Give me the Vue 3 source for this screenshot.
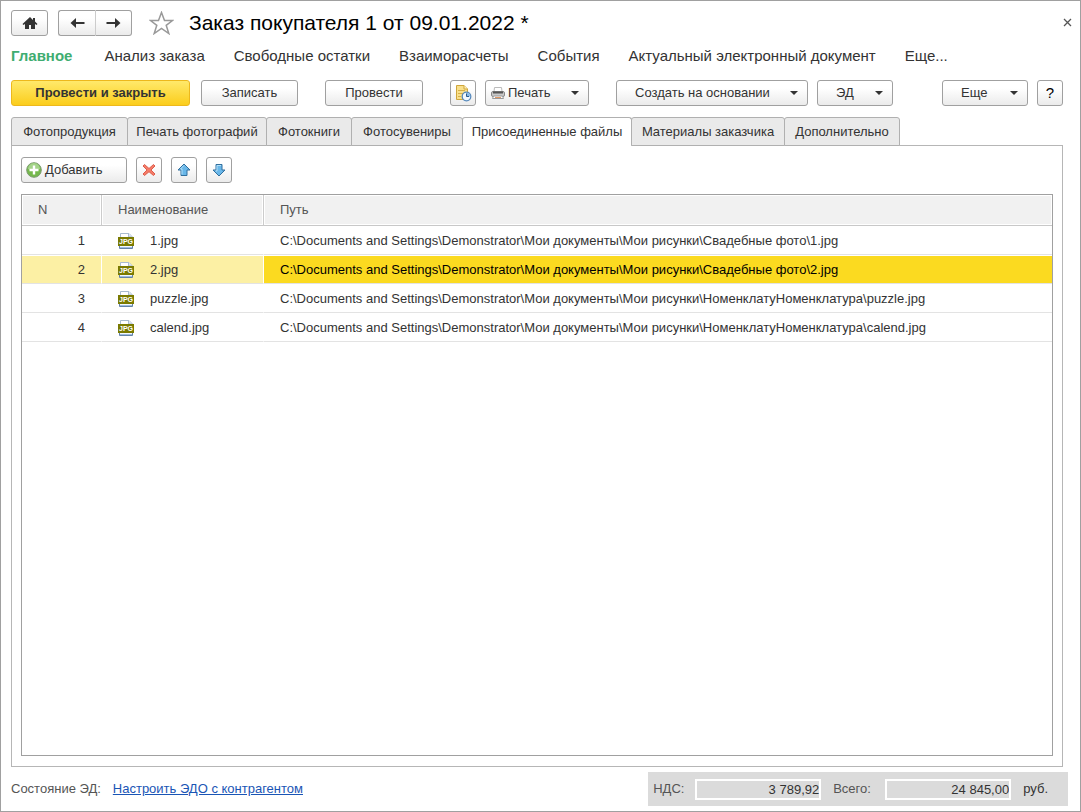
<script setup>
import { ref } from 'vue'

const links = ['Анализ заказа', 'Свободные остатки', 'Взаиморасчеты', 'События', 'Актуальный электронный документ', 'Еще...']
const tabs = [
  { title: 'Фотопродукция', width: 117 },
  { title: 'Печать фотографий', width: 140 },
  { title: 'Фотокниги', width: 86 },
  { title: 'Фотосувениры', width: 112 },
  { title: 'Присоединенные файлы', width: 170 },
  { title: 'Материалы заказчика', width: 154 },
  { title: 'Дополнительно', width: 116 },
]
const activeTab = ref(4)
const selected = ref(1)
const base = 'C:\\Documents and Settings\\Demonstrator\\Мои документы\\Мои рисунки\\'
const files = [
  { name: '1.jpg', path: base + 'Свадебные фото\\1.jpg' },
  { name: '2.jpg', path: base + 'Свадебные фото\\2.jpg' },
  { name: 'puzzle.jpg', path: base + 'НоменклатуНоменклатура\\puzzle.jpg' },
  { name: 'calend.jpg', path: base + 'НоменклатуНоменклатура\\calend.jpg' },
]
const vat = ref('3 789,92')
const total = ref('24 845,00')
</script>

<template>
  <div class="window">
    <header class="head">
      <button class="btn home" aria-label="Домой">
        <svg width="16" height="14" viewBox="0 0 16 14"><path d="M8 1L0.500 8L1.500 9L3 8V13H7V9H9V13H13V8L14.500 9L15.500 8L13 5.500V2H11V4Z" fill="#333" /></svg>
      </button>
      <div class="history">
        <button class="btn back" aria-label="Назад">
          <svg width="15" height="12" viewBox="0 0 15 12"><path d="M0.500 6L6 1V5H14.500V7H6V11Z" fill="#333" /></svg>
        </button>
        <button class="btn forward" aria-label="Вперед">
          <svg width="15" height="12" viewBox="0 0 15 12"><path d="M14.500 6L9 1V5H0.500V7H9V11Z" fill="#333" /></svg>
        </button>
      </div>
      <button class="plain star" aria-label="В избранное">
        <svg width="25" height="24" viewBox="0 0 25 24"><path d="M12.500 1.500L15.500 9.500H23.500L17.200 14.300L19.800 22.500L12.500 17.500L5.200 22.500L7.800 14.300L1.500 9.500H9.500Z" fill="#fff" stroke="#999" stroke-width="1.500" /></svg>
      </button>
      <h1>Заказ покупателя 1 от 09.01.2022 *</h1>
      <button class="plain close" aria-label="Закрыть">
        <svg width="9" height="9" viewBox="0 0 9 9"><path d="M1 1L8 8M8 1L1 8" stroke="#555" stroke-width="1.300" /></svg>
      </button>
    </header>

    <nav class="links">
      <a href="#" class="current">Главное</a>
      <a v-for="l in links" :key="l" href="#">{{ l }}</a>
    </nav>

    <div class="toolbar">
      <div class="group lead">
        <button class="btn primary">Провести и закрыть</button>
        <button class="btn save">Записать</button>
      </div>
      <button class="btn post">Провести</button>
      <div class="group">
        <button class="btn square" aria-label="Задание">
          <svg width="18" height="18" viewBox="0 0 18 18">
            <path d="M2.500 1.500H10L13.500 5V15.500H2.500Z" fill="#f9e08b" stroke="#cfa63c" />
            <path d="M10 1.500V5H13.500" fill="#fff3bd" stroke="#cfa63c" />
            <path d="M4 6.500H11M4 9.500H9M4 12.500H7" stroke="#d7b048" />
            <circle cx="12.500" cy="12.500" r="4.300" fill="#f2f8fd" stroke="#5588bb" stroke-width="1.300" />
            <path d="M12.500 12.500V8.700A3.800 3.800 0 0 1 16.300 12.500Z" fill="#87b9e6" />
            <path d="M12.500 12.500V9.500M12.500 12.500H15" stroke="#29598b" fill="none" />
          </svg>
        </button>
        <button class="btn print">
          <svg width="14" height="14" viewBox="0 0 14 14">
            <path d="M3 5.500L3.500 1.500H10.500L11 5.500" fill="#fff" stroke="#bbb" />
            <rect x="0.500" y="5.500" width="13" height="5" rx="1.500" fill="#c9c9c9" stroke="#888" />
            <path d="M2 6.500H12" stroke="#555" stroke-width="2" />
            <path d="M2.500 10H11.500L12.500 12.500H1.500Z" fill="#fff" stroke="#999" />
            <path d="M4 11.500H10" stroke="#e39a67" />
          </svg>
          <span>Печать</span><i class="caret"></i>
        </button>
      </div>
      <div class="group">
        <button class="btn create"><span>Создать на основании</span><i class="caret"></i></button>
        <button class="btn ed"><span>ЭД</span><i class="caret"></i></button>
      </div>
      <div class="group end">
        <button class="btn more"><span>Еще</span><i class="caret"></i></button>
        <button class="btn square help">?</button>
      </div>
    </div>

    <div class="tabs" role="tablist">
      <button
        v-for="(t, i) in tabs" :key="t.title" role="tab" class="tab"
        :class="{ active: i === activeTab }" :style="{ width: t.width + 'px' }"
        :aria-selected="i === activeTab" @click="activeTab = i"
      >{{ t.title }}</button>
    </div>

    <main class="panel">
      <div class="commands">
        <button class="btn add">
          <svg width="16" height="16" viewBox="0 0 16 16">
            <circle cx="8" cy="8" r="7.300" fill="#75b84c" stroke="#7c9a70" />
            <path d="M2 7A6 6 0 0 1 14 7Q8 9 2 7Z" fill="#a4d489" />
            <path d="M8 3.500V12.500M3.500 8H12.500" stroke="#fff" stroke-width="2.400" />
          </svg>
          <span>Добавить</span>
        </button>
        <button class="btn square" aria-label="Удалить">
          <svg width="14" height="14" viewBox="0 0 14 14"><path d="M2.500 1.500L7 5.500L11.500 1.500L13 3L9 7L13 11L11.500 12.500L7 8.700L2.500 12.500L1 11L5 7L1 3Z" fill="#f47c68" stroke="#de5d4c" /></svg>
        </button>
        <button class="btn square" aria-label="Переместить вверх">
          <svg width="14" height="14" viewBox="0 0 14 14"><path d="M7 1L13 7H10V12.500H4V7H1Z" fill="#69b7e9" stroke="#316f9e" /><path d="M7 2.500L3.500 6H5V11.500" fill="none" stroke="#b4e0f8" /></svg>
        </button>
        <button class="btn square" aria-label="Переместить вниз">
          <svg width="14" height="14" viewBox="0 0 14 14"><path d="M7 13L1 7H4V1.500H10V7H13Z" fill="#69b7e9" stroke="#316f9e" /><path d="M9 2.500H5V8H3.500" fill="none" stroke="#b4e0f8" /></svg>
        </button>
      </div>

      <div class="grid">
        <table>
          <colgroup><col class="c-num" /><col class="c-name" /><col /></colgroup>
          <thead>
            <tr><th>N</th><th>Наименование</th><th>Путь</th></tr>
          </thead>
          <tbody>
            <tr v-for="(f, i) in files" :key="f.name" :class="{ selected: i === selected }" @click="selected = i">
              <td class="num">{{ i + 1 }}</td>
              <td>
                <div class="file">
                  <svg width="16" height="16" viewBox="0 0 16 16" aria-hidden="true">
                    <path d="M2.500 5V0.500H11L14.500 4V5" fill="#fff" stroke="#a9bbd0" />
                    <path d="M10.500 0.500V4H14" fill="#dfe8f2" stroke="#a9bbd0" />
                    <path d="M1.500 12V15.500H14.500V12" fill="#f3f8fd" stroke="#6482a8" />
                    <path d="M2 14.500H14" stroke="#9dbbe0" />
                    <rect y="4" width="16" height="9" fill="#7a7a00" />
                    <text x="8" y="11" text-anchor="middle" font-size="7" font-weight="bold" fill="#fff">JPG</text>
                  </svg>
                  <span>{{ f.name }}</span>
                </div>
              </td>
              <td class="path">{{ f.path }}</td>
            </tr>
          </tbody>
        </table>
      </div>
    </main>

    <footer class="foot">
      <span class="state">Состояние ЭД:</span>
      <a href="#">Настроить ЭДО с контрагентом</a>
      <div class="totals">
        <label for="vat" class="vat">НДС:</label>
        <input id="vat" v-model="vat" type="text" readonly />
        <label for="total" class="total">Всего:</label>
        <input id="total" v-model="total" type="text" readonly />
        <span>руб.</span>
      </div>
    </footer>
  </div>
</template>

<style>
body { margin: 0; background: #fff; }
</style>

<style scoped>
* { box-sizing: border-box; }
.window {
  min-height: 100vh;
  display: flex;
  flex-direction: column;
  padding: 8px 17px 5px 10px;
  border: 1px solid #a0a0a0;
  background: #fff;
  color: #333;
  font: 13px/16px "Liberation Sans", Arial, sans-serif;
}
button, input { font: inherit; color: inherit; }
svg { display: block; flex: none; }
.btn {
  height: 26px;
  display: flex;
  align-items: center;
  justify-content: center;
  padding: 0;
  border: 1px solid #a0a0a0;
  border-radius: 3px;
  background: linear-gradient(#fff 30%, #ebebeb);
  white-space: nowrap;
}
.plain { padding: 0; border: 0; background: none; }
.head { display: flex; align-items: center; height: 27px; }
.home { width: 37px; margin-right: 10px; }
.history { display: flex; }
.back, .forward { width: 38px; }
.back { border-right-color: #ccc; border-radius: 3px 0 0 3px; }
.forward { width: 36px; border-left: 0; border-radius: 0 3px 3px 0; }
.star { margin: 0 15px 0 17px; }
h1 { margin: 0; color: #000; font-size: 21px; line-height: 26px; font-weight: normal; white-space: nowrap; }
.close { margin: 0 -9px 0 auto; }
.links { display: flex; gap: 29px; margin-top: 10px; font-size: 15px; line-height: 20px; white-space: nowrap; }
.links a { color: #333; text-decoration: none; }
.links .current { margin-right: 3px; color: #3fad71; font-weight: bold; }
.toolbar { display: flex; gap: 27px; margin-top: 14px; }
.group { display: flex; gap: 9px; }
.lead { gap: 11px; }
.end { margin-left: auto; }
.primary { width: 179px; border-color: #edb81c; background: linear-gradient(#ffe96b, #fbcd1c); font-weight: bold; }
.save { width: 97px; }
.post { width: 98px; }
.square { width: 26px; }
.help { font-size: 15px; color: #000; }
.caret { border: 4px solid transparent; border-top-color: #333; border-bottom: 0; }
.print, .create, .ed, .more { justify-content: space-between; padding-right: 9px; }
.print { width: 104px; padding-left: 5px; }
.print span { margin: 0 auto 0 3px; }
.create { width: 192px; padding-left: 18px; }
.ed { width: 76px; padding-left: 18px; }
.more { width: 86px; padding-left: 18px; }
.tabs { position: relative; display: flex; margin-top: 11px; }
.tab {
  height: 29px;
  padding: 0;
  border: 1px solid #b0b0b0;
  border-radius: 3px 3px 0 0;
  background: #eaeaea;
  white-space: nowrap;
}
.tab + .tab { margin-left: -1px; }
.tab.active { border-bottom-color: #fff; background: #fff; }
.panel {
  flex: 1;
  display: flex;
  flex-direction: column;
  margin-top: -1px;
  padding: 11px 9px 10px;
  border: 1px solid #b6b6b6;
}
.commands { display: flex; gap: 9px; }
.add { width: 106px; justify-content: flex-start; gap: 3px; padding-left: 4px; }
.grid { flex: 1; margin-top: 11px; border: 1px solid #a0a0a0; }
table { width: 100%; table-layout: fixed; border-collapse: separate; border-spacing: 0; }
.c-num { width: 80px; }
.c-name { width: 162px; }
th {
  height: 31px;
  padding: 0 0 0 16px;
  border-right: 1px solid #ccc;
  border-bottom: 1px solid #c8c8c8;
  background: #f1f1f1;
  box-shadow: inset 0 0 0 1px #fff;
  color: #555;
  font-weight: normal;
  text-align: left;
}
th:last-child { border-right: 0; }
td { height: 29px; padding: 0 0 0 16px; border-top: 1px solid #fff; border-bottom: 1px solid #e3e3e3; border-right: 1px solid #fff; white-space: nowrap; }
td:last-child { border-right: 0; }
.num { padding: 0 16px 0 0; text-align: right; }
.file { display: flex; align-items: center; gap: 16px; }
.selected td { background: #fcf0a4; background-clip: padding-box; }
.selected .path { background-color: #fbda20; color: #000; }
.foot { display: flex; align-items: center; margin-top: 5px; margin-right: -5px; }
.state { margin-right: 12px; color: #555; }
.foot a { color: #1a55b5; }
.totals { display: flex; align-items: center; height: 34px; margin-left: auto; padding: 0 20px 0 5px; background: #dbdbdb; }
.totals label { color: #555; }
.vat { width: 42px; }
.total { width: 52px; }
.totals input { width: 126px; height: 21px; margin-right: 12px; padding: 0; border: 2px solid #fff; background: transparent; text-align: right; }
</style>
